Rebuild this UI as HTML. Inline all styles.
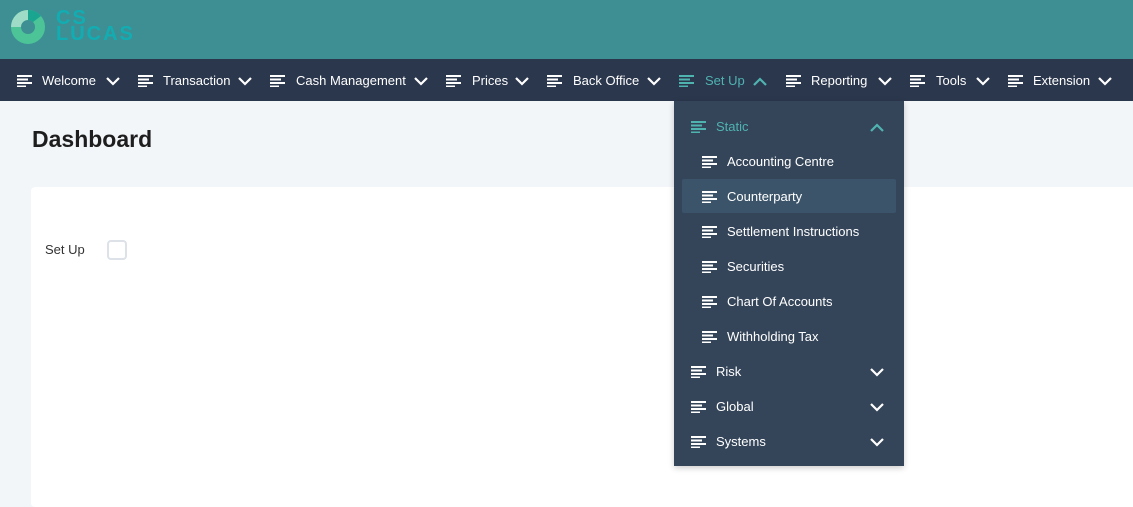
<!DOCTYPE html>
<html><head><meta charset="utf-8"><style>
*{margin:0;padding:0;box-sizing:border-box}
body{width:1133px;height:490px;overflow:hidden;background:#f3f6f9;font-family:"Liberation Sans",sans-serif;position:relative}
.hdr{position:absolute;left:0;top:0;width:1133px;height:59px;background:#3e8f93}
.nav{position:absolute;left:0;top:59px;width:1133px;height:42px;background:#2b374d}
.a{position:absolute;white-space:nowrap}
.t{font-size:13px;color:#fff;line-height:16px}
.ic{position:absolute;width:15px;height:12px}
.ch{position:absolute;width:14px;height:9px}
.dd{position:absolute;left:674px;top:101px;width:230px;height:365px;background:#344459;box-shadow:0 2px 6px rgba(0,0,0,.2)}
.card{position:absolute;left:31px;top:187px;width:1110px;height:320px;background:#fff;border-radius:4px}
</style></head><body>
<div class="hdr"></div>
<svg class="a" style="left:11px;top:10px" width="34" height="34" viewBox="0 0 34 34">
<circle cx="17" cy="17" r="12" fill="none" stroke="#4cc497" stroke-width="10"/>
<path d="M17 0 A17 17 0 0 0 0 17 L10 17 A7 7 0 0 1 17 10Z" fill="#9fdcc8"/>
<path d="M17 0 A17 17 0 0 1 30 6 L22 12 A7 7 0 0 0 17 10Z" fill="#1aa591"/>
</svg>
<div class="a" style="left:56px;top:10px;font:900 20px/16px 'Liberation Sans',sans-serif;color:#12adb2;letter-spacing:2px">CS<br>LUCAS</div>
<div class="nav"></div>
<svg width="0" height="0" style="position:absolute"><defs>
<g id="m"><rect x="0" y="0" width="15" height="2"/><rect x="0" y="3.5" width="11" height="2"/><rect x="0" y="7" width="15" height="2"/><rect x="0" y="10.5" width="9" height="1.5"/></g>
</defs></svg>
<div id="navitems"></div>
<div class="a" style="left:32px;top:126px;font-size:23px;font-weight:bold;color:#1e1e1e">Dashboard</div>
<div class="card"></div>
<div class="a" style="left:45px;top:242px;font-size:13px;color:#333">Set Up</div>
<div class="a" style="left:107px;top:240px;width:20px;height:20px;border:2px solid #dde1e8;border-radius:4px;background:#fff"></div>
<div class="dd"></div>
<div class="a" style="left:682px;top:179px;width:214px;height:34px;background:#3b546a;border-radius:2px"></div>
<div id="dditems"></div>
<script>
function icon(x,y,c){return `<svg class="ic" style="left:${x}px;top:${y}px;fill:${c}" viewBox="0 0 15 12"><use href="#m"/></svg>`}
function chev(x,y,c,up){return `<svg class="ch" style="left:${x}px;top:${y}px" viewBox="0 0 14 9"><path d="${up?'M1 8L7 2L13 8':'M1 1L7 7L13 1'}" fill="none" stroke="${c}" stroke-width="2.2"/></svg>`}
var n=[["Welcome",17,42,106],["Transaction",138,163,238],["Cash Management",270,296,414],["Prices",446,472,515],["Back Office",547,573,647],["Set Up",679,705,753],["Reporting",786,811,878],["Tools",910,936,976],["Extension",1008,1033,1098]];
var h="";n.forEach(function(i){var c=i[0]=="Set Up"?"#4fb3b0":"#fff";h+=icon(i[1],75,c)+`<div class="a t" style="left:${i[2]}px;top:73px;color:${c}">${i[0]}</div>`+chev(i[3],77,c,i[0]=="Set Up")});
document.getElementById("navitems").innerHTML=h;
var d="";
d+=icon(691,121,"#4fb3b0")+`<div class="a t" style="left:716px;top:119px;color:#4fb3b0">Static</div>`+chev(870,123,"#4fb3b0",1);
["Accounting Centre","Counterparty","Settlement Instructions","Securities","Chart Of Accounts","Withholding Tax"].forEach(function(s,k){var y=162+35*k;d+=icon(702,y-6,"#fff")+`<div class="a t" style="left:727px;top:${y-8}px">${s}</div>`});
["Risk","Global","Systems"].forEach(function(s,k){var y=372+35*k;d+=icon(691,y-6,"#fff")+`<div class="a t" style="left:716px;top:${y-8}px">${s}</div>`+chev(870,y-4,"#fff",0)});
document.getElementById("dditems").innerHTML=d;
</script>
</body></html>
